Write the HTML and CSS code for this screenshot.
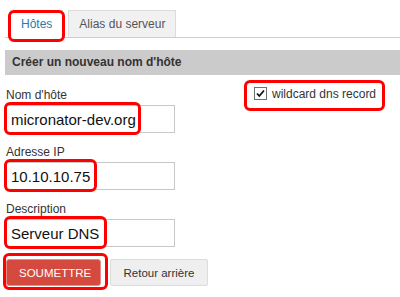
FILE: index.html
```html
<html>

<head lang="fr">
    <meta charset="utf-8">
    <title>Nouveau nom d'hôte</title>
    <link rel="stylesheet" href="styles.css">
</head>

<body>
    <div class="page">
        <ul class="tabs">
            <li class="tab active">Hôtes<span class="mark mark-tab"></span></li>
            <li class="tab">Alias du serveur</li>
        </ul>

        <h2 class="bar">Créer un nouveau nom d'hôte</h2>

        <form class="form">
            <div class="col">
                <label for="host">Nom d'hôte</label>
                <div class="field">
                    <input type="text" id="host" value="micronator-dev.org">
                    <span class="mark mark-host"></span>
                </div>

                <label for="ip">Adresse IP</label>
                <div class="field">
                    <input type="text" id="ip" value="10.10.10.75">
                    <span class="mark mark-ip"></span>
                </div>

                <label for="desc">Description</label>
                <div class="field">
                    <input type="text" id="desc" value="Serveur DNS">
                    <span class="mark mark-desc"></span>
                </div>

                <div class="actions">
                    <div class="btn-wrap">
                        <button type="submit" class="btn btn-primary">SOUMETTRE</button>
                        <span class="mark mark-btn"></span>
                    </div>
                    <button type="button" class="btn btn-back">Retour arrière</button>
                </div>
            </div>

            <div class="side">
                <label class="check">
                    <svg class="box" width="13" height="13" viewBox="0 0 13 13">
                        <rect x="0.5" y="0.5" width="12" height="12" fill="#fff" stroke="#6f6f6f"/>
                        <path d="M3 6.5 L5.3 9 L10 3.5" fill="none" stroke="#111" stroke-width="1.8"/>
                    </svg>
                    wildcard dns record
                </label>
                <span class="mark mark-check"></span>
            </div>
        </form>
    </div>
</body>

</html>
```

FILE: styles.css
```css
body {
    margin: 0;
    background: #fff;
    font-family: "Liberation Sans", Arial, sans-serif;
    color: #333;
}

.page {
    padding-left: 5px;
}

.mark {
    position: absolute;
    border: 3px solid #f00;
    border-radius: 6px;
    box-sizing: border-box;
    pointer-events: none;
}

/* tabs */
.tabs {
    display: flex;
    gap: 5px;
    list-style: none;
    margin: 10px 0 0 0;
    padding: 0 0 0 5px;
    border-bottom: 1px solid #cfcfcf;
    height: 27px;
}

.tab {
    position: relative;
    height: 27px;
    line-height: 26px;
    padding: 0 10px;
    font-size: 12px;
    color: #555;
    background: #f1f1f1;
    border: 1px solid #dcdcdc;
    border-bottom: none;
    box-sizing: border-box;
}

.tab.active {
    background: #fff;
    color: #2a78b5;
    height: 28px;
}

.mark-tab {
    left: -3px;
    top: -1px;
    width: 57px;
    height: 32px;
}

/* section header */
.bar {
    margin: 12px 0 0 0;
    height: 25px;
    line-height: 25px;
    padding-left: 7px;
    font-size: 12px;
    font-weight: bold;
    color: #333;
    background: #cbcbcb;
}

/* form */
.form {
    display: flex;
    margin: 0;
    padding-top: 13px;
}

.col {
    width: 240px;
}

.col label {
    display: block;
    font-size: 12px;
    line-height: 14px;
    margin-bottom: 3px;
    padding-left: 1px;
    color: #333;
}

.field {
    position: relative;
    margin-bottom: 12px;
}

.field input {
    display: block;
    width: 170px;
    height: 28px;
    box-sizing: border-box;
    border: 1px solid #c8c8c8;
    padding: 0 5px;
    font-family: "Liberation Sans", Arial, sans-serif;
    font-size: 15px;
    color: #111;
    background: #fff;
}

.mark-host {
    left: -1px;
    top: -3px;
    width: 137px;
    height: 33px;
}

.mark-ip {
    left: -1px;
    top: -3px;
    width: 93px;
    height: 33px;
}

.mark-desc {
    left: -1px;
    top: -3px;
    width: 103px;
    height: 33px;
}

.actions {
    display: flex;
    gap: 9px;
    padding-left: 1px;
}

.btn-wrap {
    position: relative;
}

.btn {
    display: block;
    height: 27px;
    padding: 0 12px;
    font-family: "Liberation Sans", Arial, sans-serif;
    font-size: 11.5px;
    white-space: nowrap;
    color: #333;
    background: #efefef;
    border: 1px solid #dcdcdc;
    border-radius: 2px;
    cursor: pointer;
}

.btn-primary {
    width: 95px;
    color: #fff;
    background: #d44a3e;
    border: 1px solid #e88d85;
    border-radius: 3px;
}

.btn-back {
    width: 98px;
    padding: 0;
}

.mark-btn {
    left: -3px;
    top: -6px;
    width: 105px;
    height: 37px;
}

.side {
    position: relative;
    padding-left: 9px;
}

.check {
    display: flex;
    align-items: center;
    gap: 5px;
    height: 13px;
    margin-top: -1px;
    font-size: 12px;
    color: #333;
}

.box {
    display: block;
}

.mark-check {
    left: -1px;
    top: -8px;
    width: 141px;
    height: 31px;
}
```
